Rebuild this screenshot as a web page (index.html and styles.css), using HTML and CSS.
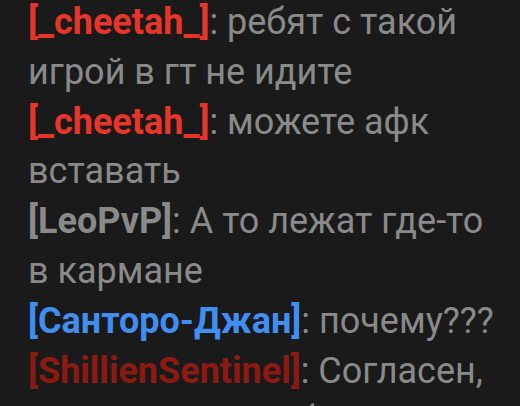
FILE: index.html
```html
<!DOCTYPE html>
<html lang="ru">
<head>
    <meta charset="UTF-8">
    <meta name="viewport" content="width=device-width, initial-scale=1.0">
    <title>Чат</title>
    <link rel="stylesheet" href="styles.css">
</head>
<body>
    <div class="chat">
        <p class="msg"><span class="nick red">[_cheetah_]</span>: ребят с такой игрой в гт не идите</p>
        <p class="msg"><span class="nick red">[_cheetah_]</span>: можете афк вставать</p>
        <p class="msg"><span class="nick gray">[LeoPvP]</span>: А то лежат где-то в кармане</p>
        <p class="msg"><span class="nick blue">[Санторо-Джан]</span>: почему???</p>
        <p class="msg"><span class="nick darkred">[ShillienSentinel]</span>: Согласен, но не знаю, что будет</p>
    </div>
</body>
</html>
```
FILE: styles.css
```css
body {
    margin: 0;
    background-color: #1a1a1a;
    color: #8a8a8a;
    font-family: Roboto, 'Liberation Sans', sans-serif;
    overflow: hidden;
}
.chat {
    padding: 0 12px 0 28px;
    margin-top: -2px;
}
.msg {
    margin: 0;
    font-size: 36px;
    line-height: 49.8px;
}
.nick {
    font-weight: bold;
}
.red {
    color: #e8352a;
}
.gray {
    color: #8a8a8a;
}
.blue {
    color: #3f8ef0;
}
.darkred {
    color: #8c1a12;
}
```
